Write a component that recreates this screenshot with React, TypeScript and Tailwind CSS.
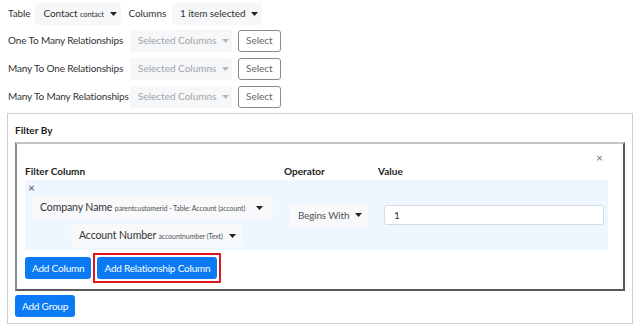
const font = { fontFamily: 'Lato, "Open Sans", sans-serif' };

function Caret({ className = '' }: { className?: string }) {
  return (
    <svg width="7" height="4" viewBox="0 0 7 4" className={`shrink-0 ${className}`}>
      <path d="M0 0h7L3.5 4z" fill="currentColor" />
    </svg>
  );
}

function Dropdown({
  children,
  className = '',
  muted = false,
}: {
  children: React.ReactNode;
  className?: string;
  muted?: boolean;
}) {
  return (
    <div
      className={`flex h-[22px] shrink-0 items-center justify-between gap-[6px] overflow-hidden rounded-[3px] bg-[#f6f7f9] px-2 ${
        muted ? 'text-[#a0a5aa]' : 'text-[#333]'
      } ${className}`}
    >
      <span className="whitespace-nowrap">{children}</span>
      <Caret className={muted ? 'text-[#b5b9be]' : 'text-[#222]'} />
    </div>
  );
}

function RelRow({ label }: { label: string }) {
  return (
    <div className="flex h-[23px] items-center">
      <span className="w-[122px] shrink-0 whitespace-nowrap tracking-[-0.15px]">{label}</span>
      <Dropdown muted className="w-[102px]">
        Selected Columns
      </Dropdown>
      <button className="ml-[6px] h-[22px] rounded-[3px] border border-[#8a8a8a] bg-white px-[7px] text-[#666]">
        Select
      </button>
    </div>
  );
}

function BlueButton({ children }: { children: React.ReactNode }) {
  return (
    <button className="h-[22px] rounded-[3px] bg-[#0a7bf5] px-[7px] tracking-[-0.2px] text-white">
      {children}
    </button>
  );
}

export default function App() {
  return (
    <div className="h-[330px] w-[640px] bg-white text-[10px] text-[#333]" style={font}>
      <div className="flex flex-col gap-[5px] pl-2 pt-[3px]">
        <div className="flex h-[21px] items-center tracking-[-0.1px]">
          <span className="mr-[5px]">Table</span>
          <Dropdown className="w-[86px]">
            <span>
              Contact <span className="text-[7.5px]">contact</span>
            </span>
          </Dropdown>
          <span className="ml-[7px] mr-[6px]">Columns</span>
          <Dropdown className="w-[90px]">1 item selected</Dropdown>
        </div>
        <RelRow label="One To Many Relationships" />
        <RelRow label="Many To One Relationships" />
        <RelRow label="Many To Many Relationships" />
      </div>

      <div className="mx-[7px] mt-[5px] h-[211px] border border-[#cfcfcf] px-[7px] pt-[9px]">
        <div className="font-bold text-[#222]">Filter By</div>
        <div className="mt-[4px] h-[149px] border-2 border-b-[#5a5a5a] border-l-[#8a8a8a] border-r-[#5a5a5a] border-t-[#c4c4c4] px-2">
          <div className="flex justify-end pr-[12px] pt-[8px] text-[12px] leading-none text-[#777]">×</div>
          <div className="flex font-bold text-[#222]">
            <span className="w-[259px]">Filter Column</span>
            <span className="w-[94px]">Operator</span>
            <span>Value</span>
          </div>
          <div className="mt-[1px] mr-[7px] flex h-[70px] bg-[#eef6ff]">
            <div className="flex w-[258px] flex-col">
              <span className="ml-[3px] mt-[2px] text-[12px] leading-none text-[#555]">×</span>
              <Dropdown className="ml-[7px] mt-[2px] h-[23px] w-[241px] bg-[#f7f9fb] pr-[10px] text-[10.5px] tracking-[-0.1px]">
                Company Name{' '}
                <span className="text-[7px] text-[#555]">parentcustomerid - Table: Account (account)</span>
              </Dropdown>
              <Dropdown className="ml-[46px] mt-[5px] h-[23px] w-[171px] bg-[#f7f9fb] pr-[10px] text-[10.5px] tracking-[-0.1px]">
                Account Number <span className="text-[7px] text-[#555]">accountnumber (Text)</span>
              </Dropdown>
            </div>
            <div className="ml-[7px] flex items-center">
              <Dropdown className="h-[23px] w-[78px] bg-[#f7f9fb] pr-[9px] tracking-[-0.2px] text-[#555]">
                Begins With
              </Dropdown>
            </div>
            <div className="ml-[16px] flex flex-1 items-center pr-[4px]">
              <div className="flex h-[20px] w-full items-center rounded-[3px] border border-[#d6dbe0] bg-white px-[9px] text-[#333]">
                1
              </div>
            </div>
          </div>
          <div className="mt-[3px] flex items-center">
            <BlueButton>Add Column</BlueButton>
            <div className="ml-[2px] border-2 border-[#e0141e] p-[2px]">
              <BlueButton>Add Relationship Column</BlueButton>
            </div>
          </div>
        </div>
        <div className="mt-[4px]">
          <BlueButton>Add Group</BlueButton>
        </div>
      </div>
    </div>
  );
}
